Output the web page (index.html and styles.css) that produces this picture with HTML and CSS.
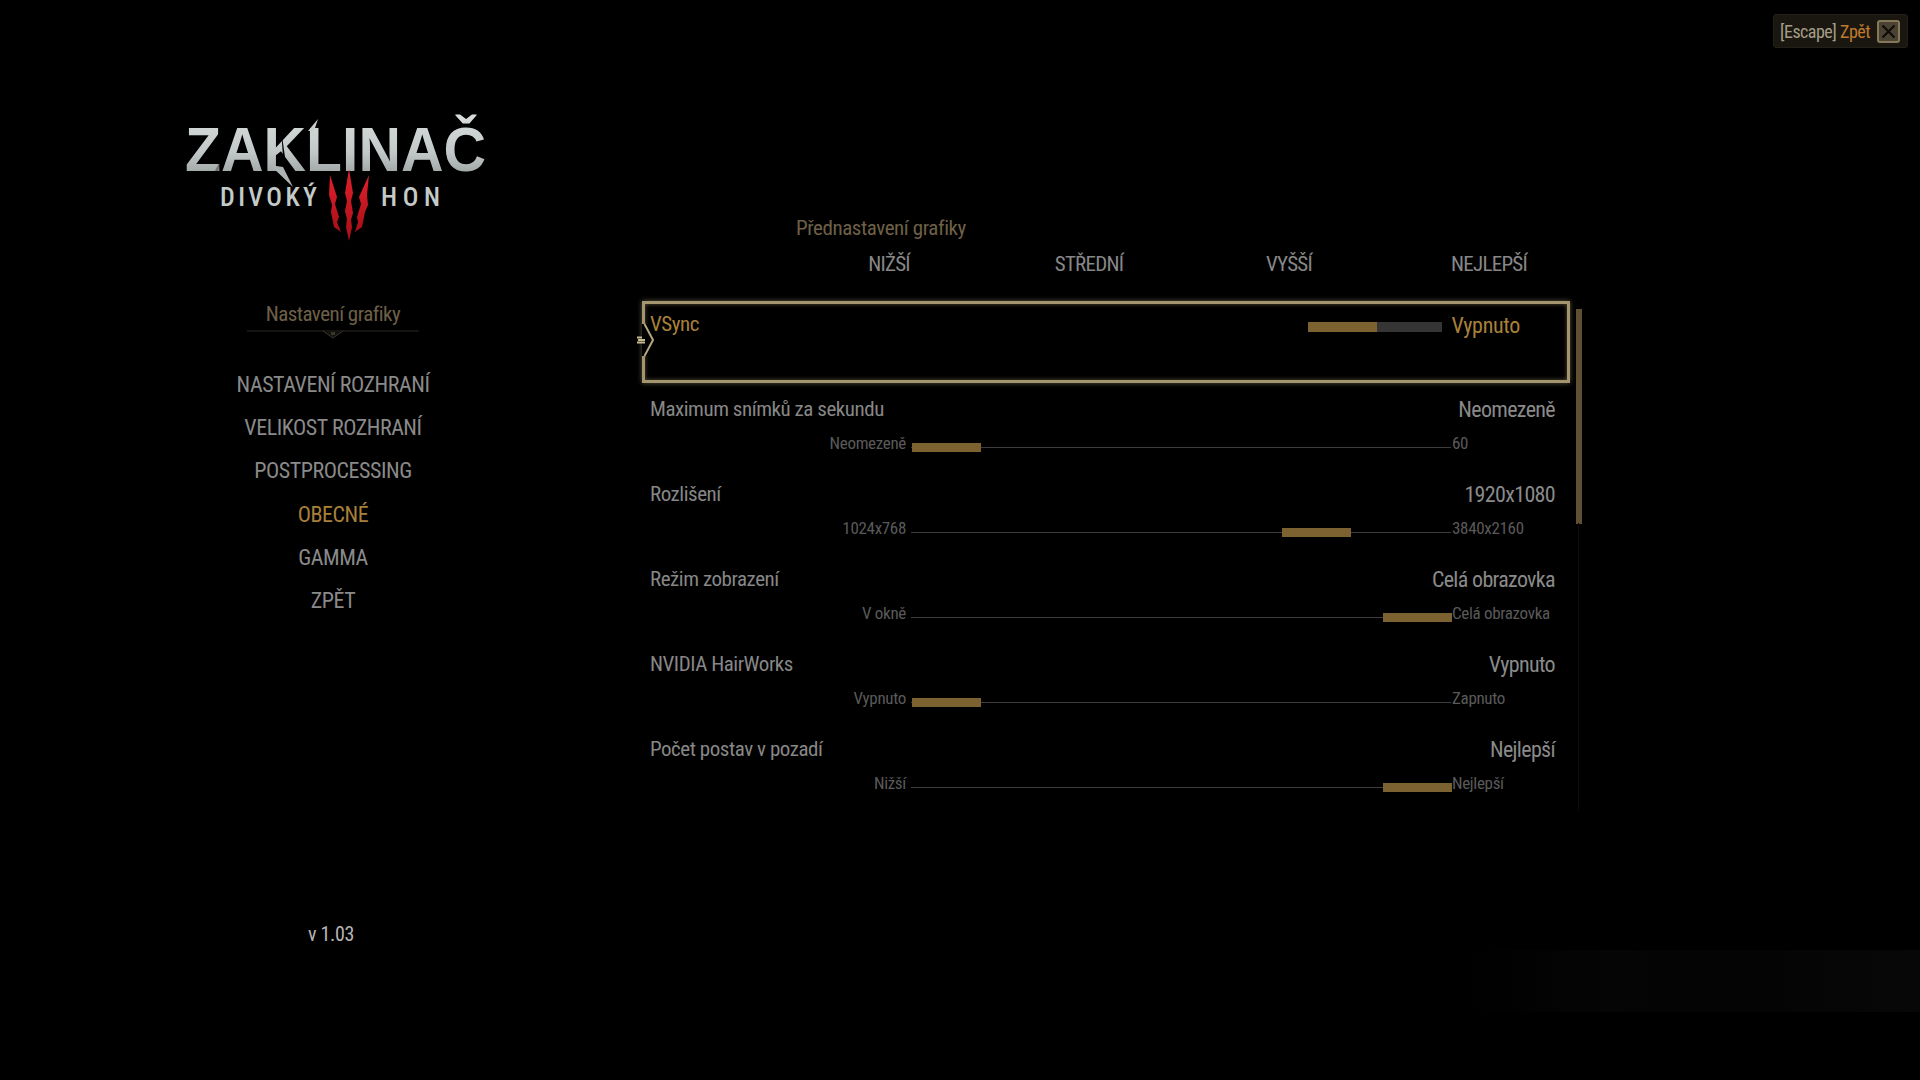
FILE: index.html
```html
<!DOCTYPE html>
<html lang="cs">
<head>
<meta charset="utf-8">
<title>Nastavení grafiky</title>
<link rel="stylesheet" href="styles.css">
</head>
<body>
<div class="page">
  <div class="escape">
    <span class="esc-key">[Escape]</span>
    <span class="esc-label">Zpět</span>
    <svg class="esc-icon" viewBox="0 0 23 23" width="23" height="23">
      <rect x="1" y="1" width="21" height="21" rx="2" fill="#4a4232" stroke="#85775a" stroke-width="2"/>
      <path d="M5.500 5.500 17.500 17.500M17.500 5.500 5.500 17.500" stroke="#0e0d0a" stroke-width="2.200" fill="none"/>
    </svg>
  </div>

  <aside class="sidebar">
    <svg class="logo" viewBox="0 0 302 126" width="302" height="126">
      <defs>
        <linearGradient id="silver" x1="0" y1="0" x2="0" y2="1">
          <stop offset="0" stop-color="#d9dddc"/>
          <stop offset="0.55" stop-color="#c2c8c8"/>
          <stop offset="1" stop-color="#8f9696"/>
        </linearGradient>
        <linearGradient id="blood" x1="0" y1="0" x2="0" y2="1">
          <stop offset="0" stop-color="#e2202c"/>
          <stop offset="1" stop-color="#a80f18"/>
        </linearGradient>
      </defs>
      <text class="logo-title" x="0" y="54" textLength="301" lengthAdjust="spacingAndGlyphs" fill="url(#silver)">ZAKLINAČ</text>
      <path d="M96 12 102 54 99 54Z" fill="#000"/>
      <path d="M30 54 48 16 50 16 33 54Z" fill="#000" opacity="0.35"/>
      <path d="M85 48 108 70 98 50Z" fill="#aeb4b4"/>
      <path d="M123 14 133 2 129 14Z" fill="#c9cece"/>
      <text class="logo-sub" x="35" y="89" textLength="97" fill="#c3cbc9">DIVOKÝ</text>
      <text class="logo-sub" x="196" y="89" textLength="59" fill="#c3cbc9">HON</text>
      <path d="M145 58 152 80 150 87 154 100 152 105 156 115 149 110 146 95 147 88 144 78Z" fill="url(#blood)"/>
      <path d="M164 52 168 76 166 84 168 96 166 103 167 110 164 124 161 110 162 102 160 94 162 84 160 76Z" fill="url(#blood)"/>
      <path d="M184 58 182 78 183 88 180 95 177 110 170 115 173 105 172 100 176 87 174 80Z" fill="url(#blood)"/>
    </svg>

    <div class="menu-head">
      <span class="menu-title">Nastavení grafiky</span>
      <svg class="menu-rule" viewBox="0 0 172 14" width="172" height="14">
        <path d="M0 3H172" stroke="#2a2720" stroke-width="1"/>
        <path d="M76 3 86 10 96 3" stroke="#3a352a" stroke-width="1" fill="#141210"/>
        <path d="M84 4h4v3h-4z" fill="#3a352a"/>
      </svg>
    </div>

    <nav class="menu">
      <a class="menu-item">NASTAVENÍ ROZHRANÍ</a>
      <a class="menu-item">VELIKOST ROZHRANÍ</a>
      <a class="menu-item">POSTPROCESSING</a>
      <a class="menu-item is-active">OBECNÉ</a>
      <a class="menu-item">GAMMA</a>
      <a class="menu-item">ZPĚT</a>
    </nav>

    <div class="version">v 1.03</div>
  </aside>

  <main class="content">
    <div class="presets-title">Přednastavení grafiky</div>
    <div class="presets">
      <span>NIŽŠÍ</span>
      <span>STŘEDNÍ</span>
      <span>VYŠŠÍ</span>
      <span>NEJLEPŠÍ</span>
    </div>

    <div class="list-wrap">
      <div class="list">
        <section class="row-selected">
          <svg class="notch" viewBox="0 0 20 44" width="20" height="44">
            <rect x="3" y="6" width="6" height="32" fill="#000"/>
            <path d="M5.500 6 14 22 5.500 38" stroke="#b5a67e" stroke-width="2" fill="none"/>
            <path d="M-2 18.500h5v2h-5zM-1 21h7v2h-7zM-2 23.500h8v2h-8z" fill="#c4b88f"/>
          </svg>
          <span class="row-label is-gold">VSync</span>
          <div class="toggle">
            <div class="toggle-bar"><div class="toggle-on"></div></div>
            <span class="toggle-value">Vypnuto</span>
          </div>
        </section>

        <section class="row">
          <div class="row-top"><span class="row-label">Maximum snímků za sekundu</span><span class="row-value">Neomezeně</span></div>
          <div class="slider">
            <span class="min">Neomezeně</span>
            <div class="track"><div class="thumb" style="left:1px"></div></div>
            <span class="max">60</span>
          </div>
        </section>

        <section class="row">
          <div class="row-top"><span class="row-label">Rozlišení</span><span class="row-value">1920x1080</span></div>
          <div class="slider">
            <span class="min">1024x768</span>
            <div class="track"><div class="thumb" style="left:371px"></div></div>
            <span class="max">3840x2160</span>
          </div>
        </section>

        <section class="row">
          <div class="row-top"><span class="row-label">Režim zobrazení</span><span class="row-value">Celá obrazovka</span></div>
          <div class="slider">
            <span class="min">V okně</span>
            <div class="track"><div class="thumb" style="left:472px"></div></div>
            <span class="max">Celá obrazovka</span>
          </div>
        </section>

        <section class="row">
          <div class="row-top"><span class="row-label">NVIDIA HairWorks</span><span class="row-value">Vypnuto</span></div>
          <div class="slider">
            <span class="min">Vypnuto</span>
            <div class="track"><div class="thumb" style="left:1px"></div></div>
            <span class="max">Zapnuto</span>
          </div>
        </section>

        <section class="row">
          <div class="row-top"><span class="row-label">Počet postav v pozadí</span><span class="row-value">Nejlepší</span></div>
          <div class="slider">
            <span class="min">Nižší</span>
            <div class="track"><div class="thumb" style="left:472px"></div></div>
            <span class="max">Nejlepší</span>
          </div>
        </section>
      </div>
      <div class="scrollbar"><div class="scroll-thumb"></div></div>
    </div>
  </main>
  <div class="band"></div>
</div>
</body>
</html>
```

FILE: styles.css
```css
* { box-sizing: border-box; }
html, body { margin: 0; background: #000; }
body {
  font-family: Roboto, "Liberation Sans", sans-serif;
  font-stretch: 75%;
  letter-spacing: -0.02em;
  color: #8c8c8c;
}
.page {
  position: relative;
  width: 1920px;
  height: 1080px;
  overflow: hidden;
  display: grid;
  grid-template-columns: 642px 1fr;
  background: #000;
}

/* escape button */
.escape {
  position: absolute;
  top: 14px;
  left: 1773px;
  width: 135px;
  height: 34px;
  display: flex;
  align-items: center;
  gap: 4px;
  padding-left: 6px;
  background: #19170f;
  border: 1px solid #23201a;
  border-radius: 3px;
  font-size: 18px;
  letter-spacing: -0.03em;
}
.esc-key { color: #a59d88; }
.esc-label { color: #c07a30; }
.esc-icon { flex: none; margin-left: auto; margin-right: 7px; }

/* sidebar */
.sidebar {
  padding: 117px 0 0 24px;
  display: flex;
  flex-direction: column;
  align-items: center;
}
.logo { margin-left: 6px; flex: none; display: block; overflow: visible; }
.logo-title {
  font-family: "Liberation Sans", sans-serif;
  font-weight: 700;
  font-stretch: 100%;
  letter-spacing: 0;
  font-size: 63px;
}
.logo-sub {
  font-family: Roboto, sans-serif;
  font-stretch: 75%;
  letter-spacing: 0;
  font-weight: 500;
  font-size: 26px;
}
.menu-head {
  margin-top: 58px;
  display: flex;
  flex-direction: column;
  align-items: center;
}
.menu-title { font-size: 21px; line-height: 26px; color: #6e6048; letter-spacing: -0.025em; }
.menu-rule { display: block; margin-top: 1px; }
.menu {
  margin-top: 21px;
  display: flex;
  flex-direction: column;
  align-items: center;
}
.menu-item {
  font-size: 22px;
  letter-spacing: -0.45px;
  line-height: 43.2px;
  color: #8a8a8a;
}
.menu-item.is-active { color: #a9803a; }
.version {
  margin-top: 299px;
  margin-left: -4px;
  font-size: 20px;
  line-height: 26px;
  color: #b5b5b5;
}

/* content */
.content {
  padding-top: 214px;
  display: flex;
  flex-direction: column;
}
.presets-title {
  margin-left: 154px;
  font-size: 21px;
  line-height: 28px;
  letter-spacing: -0.02em;
  color: #6e6048;
}
.presets {
  margin-top: 8px;
  margin-left: 147px;
  display: grid;
  grid-template-columns: repeat(4, 200px);
  font-size: 21px;
  letter-spacing: -0.035em;
  line-height: 28px;
  color: #878787;
  text-align: center;
}
.list-wrap {
  margin-top: 23px;
  display: flex;
  align-items: stretch;
  width: 940px;
  height: 509px;
}
.list { width: 928px; flex: none; }

.row-selected {
  position: relative;
  height: 82px;
  margin-bottom: 3px;
  padding: 6px 12px 0 5px;
  display: flex;
  justify-content: space-between;
  align-items: flex-start;
  border: 3px solid #a3966f;
  box-shadow: 0 0 5px #5d5440, inset 0 0 4px #5a5139;
}
.notch {
  position: absolute;
  left: -6px;
  top: 14px;
  overflow: visible;
}
.row { height: 85px; padding: 9px 15px 0 8px; }
.row-top {
  display: flex;
  justify-content: space-between;
  align-items: center;
  height: 28px;
}
.row-label { font-size: 21px; line-height: 28px; color: #878787; letter-spacing: -0.022em; }
.row-label.is-gold { color: #a9803a; }
.row-value { font-size: 22px; line-height: 28px; color: #8a8a8a; letter-spacing: -0.03em; margin-top: 2px; }

.toggle { display: flex; align-items: center; height: 28px; padding-right: 35px; padding-top: 3px; }
.toggle-bar { width: 134px; height: 10px; background: #353535; margin-right: 9px; margin-top: 2px; }
.toggle-on { width: 69px; height: 100%; background: #7b6230; }
.toggle-value { font-size: 22px; line-height: 28px; color: #a9803a; }

.slider {
  display: grid;
  grid-template-columns: 255px 540px auto;
  column-gap: 5px;
  margin-left: -8px;
  padding-left: 9px;
  align-items: center;
  height: 24px;
  margin-top: 8px;
}
.min, .max { font-size: 17px; line-height: 20px; color: #5a5a5a; white-space: nowrap; }
.min { text-align: right; }
.max { margin-left: -4px; }
.track { position: relative; height: 1px; background: #3d3d3d; margin-top: 8px; }
.thumb {
  position: absolute;
  top: -4px;
  width: 69px;
  height: 9px;
  background: #7b6230;
}

.scrollbar {
  margin-left: 6px;
  width: 6px;
  padding-top: 8px;
  position: relative;
}
.scrollbar::after {
  content: "";
  position: absolute;
  left: 2px;
  top: 222px;
  bottom: 0;
  width: 1px;
  background: #0c0c0c;
}
.scroll-thumb { height: 215px; background: #5f4f33; }

.band {
  position: absolute;
  left: 1470px;
  right: 0;
  top: 950px;
  height: 62px;
  background: linear-gradient(90deg, #000, #050505 30%, #040404 60%, #070707);
}
```
